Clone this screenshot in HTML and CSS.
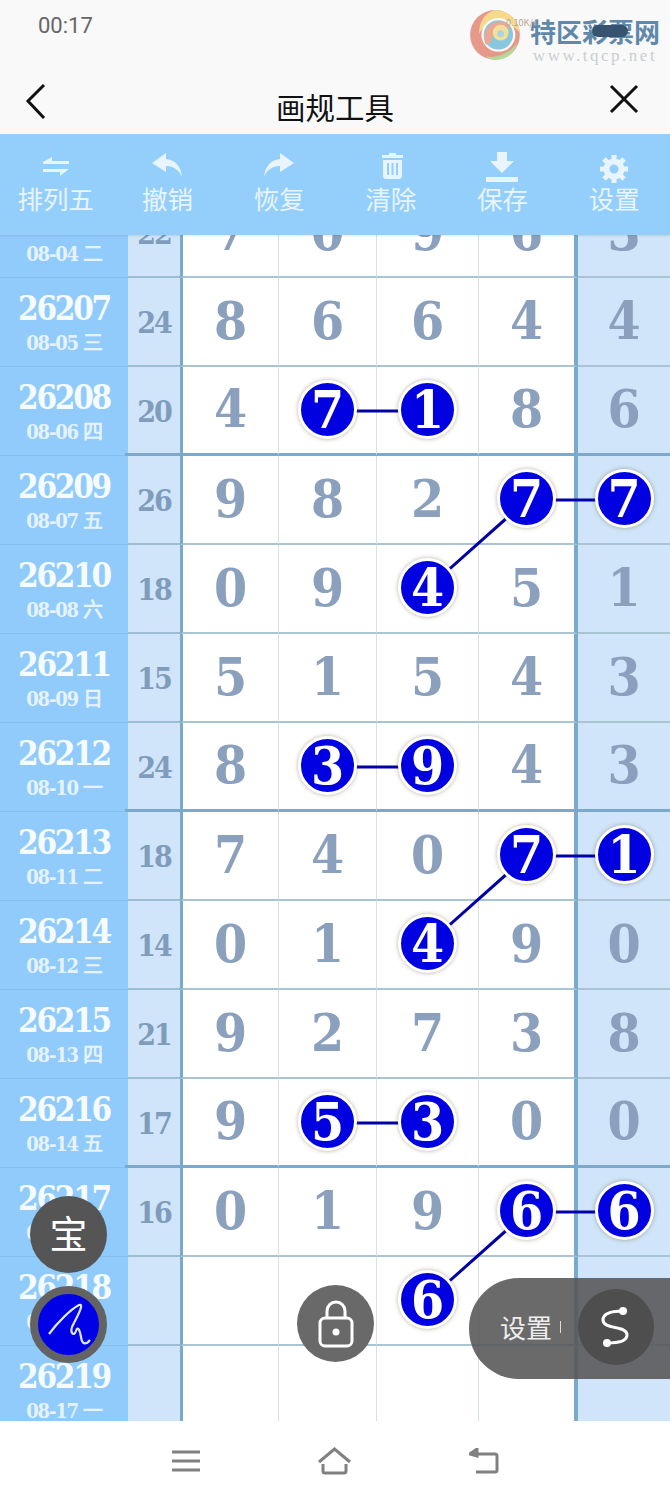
FILE: index.html
```html
<!DOCTYPE html>
<html lang="zh-CN">
<head>
    <meta charset="UTF-8">
    <meta name="viewport" content="width=device-width, initial-scale=1.0">
    <title>画规工具</title>
    <link rel="stylesheet" href="styles.css">
</head>
<body>
<div class="screen">
    <div class="status-bar">
        <span class="time">00:17</span>
        <div class="watermark">
            <svg class="watermark-logo" viewBox="4 5 44 46" width="50" height="52">
                <circle cx="26" cy="27" r="22" fill="#e58f80"/>
                <path d="M26 5a22 22 0 0 1 22 20c-6-7-14-10-24-8-6 1-10 5-12 9 0-10 4-18 14-21z" fill="#f4d77e"/>
                <path d="M46 34c-3 10-10 15-20 15-3 0-6-1-8-3 10 2 20-2 28-12z" fill="#a9d98f"/>
                <circle cx="29" cy="27" r="15" fill="#f9f9f9"/>
                <circle cx="29" cy="27" r="13" fill="#7cc3dd"/>
                <path d="M18 36c-4-8 0-20 12-21 5 0 9 3 11 7-7-4-15-2-17 5-1 4 0 7-6 9z" fill="#e8a08c"/>
                <circle cx="31" cy="25" r="7" fill="#f6dc8d"/>
                <circle cx="31" cy="26" r="3" fill="#9fd0dc"/>
            </svg>
            <div class="watermark-text">
                <span class="watermark-name">特区彩票网</span>
                <span class="watermark-url">www.tqcp.net</span>
            </div>
            <span class="net-speed">0.10K/s</span>
            <span class="net-pill"></span>
        </div>
    </div>

    <div class="nav-bar">
        <svg class="nav-back" viewBox="0 0 30 40" width="30" height="40"><path d="M22 3 6 19l16 17" fill="none" stroke="#111" stroke-width="3"/></svg>
        <span class="nav-title">画规工具</span>
        <svg class="nav-close" viewBox="0 0 34 34" width="34" height="34"><path d="M4 4l26 26M30 4 4 30" fill="none" stroke="#111" stroke-width="3"/></svg>
    </div>

    <div class="toolbar">
        <div class="tool">
            <svg viewBox="0 0 32 32" width="32" height="32"><path d="M3 10 12 5v4h17v3H3zM29 17H3v3h17v4z" fill="#e8f4fe"/></svg>
            <span>排列五</span>
        </div>
        <div class="tool">
            <svg viewBox="0 0 32 32" width="32" height="32"><path d="M15 1 1 11l14 9v-6c8 0 13 4 16 11-1-10-6-17-16-18z" fill="#e8f4fe"/></svg>
            <span>撤销</span>
        </div>
        <div class="tool">
            <svg viewBox="0 0 32 32" width="32" height="32"><path d="M17 1l14 10-14 9v-6C9 14 4 18 1 25c1-10 6-17 16-18z" fill="#e8f4fe"/></svg>
            <span>恢复</span>
        </div>
        <div class="tool">
            <svg viewBox="0 0 32 32" width="32" height="32"><path d="M14 1h7v2h7v3H7V3h7zM8 8h19v16a3 3 0 0 1-3 3H11a3 3 0 0 1-3-3zm4 3v12h2V11zm4.500 0v12h2V11zM21 11v12h2V11z" fill="#e8f4fe" fill-rule="evenodd"/></svg>
            <span>清除</span>
        </div>
        <div class="tool">
            <svg viewBox="0 0 32 32" width="32" height="32"><path d="M11 0h10v9h7L16 21 4 9h7zM0 25h32v5H0z" fill="#e8f4fe"/></svg>
            <span>保存</span>
        </div>
        <div class="tool">
            <svg viewBox="0 0 32 32" width="32" height="32"><circle cx="16" cy="17" r="7.500" fill="none" stroke="#e8f4fe" stroke-width="6"/><path d="M16 3v6M16 25v6M2 17h6M24 17h6M6 7l4 4M22 23l4 4M26 7l-4 4M10 23l-4 4" stroke="#e8f4fe" stroke-width="5"/></svg>
            <span>设置</span>
        </div>
    </div>

    <div class="chart-wrap">
        <div class="chart">
            <svg class="links" viewBox="0 0 670 1246" width="670" height="1246">
                <path d="M327 222H427"/>
                <path d="M527 311H624M427 400 527 311"/>
                <path d="M327 578H427"/>
                <path d="M527 667H624M427 756 527 667"/>
                <path d="M327 934H427"/>
                <path d="M527 1023H624M427 1112 527 1023"/>
            </svg>

            <div class="row"><div class="issue"><b>26206</b><small>08-04 二</small></div><div class="sum">22</div><div class="cell">7</div><div class="cell">0</div><div class="cell">9</div><div class="cell">6</div><div class="cell last">3</div></div>
            <div class="row"><div class="issue"><b>26207</b><small>08-05 三</small></div><div class="sum">24</div><div class="cell">8</div><div class="cell">6</div><div class="cell">6</div><div class="cell">4</div><div class="cell last">4</div></div>
            <div class="row group-end"><div class="issue"><b>26208</b><small>08-06 四</small></div><div class="sum">20</div><div class="cell">4</div><div class="cell"><span class="ball">7</span></div><div class="cell"><span class="ball">1</span></div><div class="cell">8</div><div class="cell last">6</div></div>
            <div class="row"><div class="issue"><b>26209</b><small>08-07 五</small></div><div class="sum">26</div><div class="cell">9</div><div class="cell">8</div><div class="cell">2</div><div class="cell"><span class="ball">7</span></div><div class="cell last"><span class="ball">7</span></div></div>
            <div class="row"><div class="issue"><b>26210</b><small>08-08 六</small></div><div class="sum">18</div><div class="cell">0</div><div class="cell">9</div><div class="cell"><span class="ball">4</span></div><div class="cell">5</div><div class="cell last">1</div></div>
            <div class="row"><div class="issue"><b>26211</b><small>08-09 日</small></div><div class="sum">15</div><div class="cell">5</div><div class="cell">1</div><div class="cell">5</div><div class="cell">4</div><div class="cell last">3</div></div>
            <div class="row group-end"><div class="issue"><b>26212</b><small>08-10 一</small></div><div class="sum">24</div><div class="cell">8</div><div class="cell"><span class="ball">3</span></div><div class="cell"><span class="ball">9</span></div><div class="cell">4</div><div class="cell last">3</div></div>
            <div class="row"><div class="issue"><b>26213</b><small>08-11 二</small></div><div class="sum">18</div><div class="cell">7</div><div class="cell">4</div><div class="cell">0</div><div class="cell"><span class="ball">7</span></div><div class="cell last"><span class="ball">1</span></div></div>
            <div class="row"><div class="issue"><b>26214</b><small>08-12 三</small></div><div class="sum">14</div><div class="cell">0</div><div class="cell">1</div><div class="cell"><span class="ball">4</span></div><div class="cell">9</div><div class="cell last">0</div></div>
            <div class="row"><div class="issue"><b>26215</b><small>08-13 四</small></div><div class="sum">21</div><div class="cell">9</div><div class="cell">2</div><div class="cell">7</div><div class="cell">3</div><div class="cell last">8</div></div>
            <div class="row group-end"><div class="issue"><b>26216</b><small>08-14 五</small></div><div class="sum">17</div><div class="cell">9</div><div class="cell"><span class="ball">5</span></div><div class="cell"><span class="ball">3</span></div><div class="cell">0</div><div class="cell last">0</div></div>
            <div class="row"><div class="issue"><b>26217</b><small>08-15 六</small></div><div class="sum">16</div><div class="cell">0</div><div class="cell">1</div><div class="cell">9</div><div class="cell"><span class="ball">6</span></div><div class="cell last"><span class="ball">6</span></div></div>
            <div class="row"><div class="issue"><b>26218</b><small>08-16 日</small></div><div class="sum"></div><div class="cell"></div><div class="cell"></div><div class="cell"><span class="ball">6</span></div><div class="cell"></div><div class="cell last"></div></div>
            <div class="row"><div class="issue"><b>26219</b><small>08-17 一</small></div><div class="sum"></div><div class="cell"></div><div class="cell"></div><div class="cell"></div><div class="cell"></div><div class="cell last"></div></div>
        </div>
    </div>

    <div class="bottom-nav">
        <svg viewBox="0 0 28 22" width="28" height="22"><path d="M0 2h28M0 11h28M0 20h28" stroke="#808080" stroke-width="3"/></svg>
        <svg viewBox="0 0 35 28" width="35" height="28"><path d="M2 15 17.500 2 33 15M6 17v7a2 2 0 0 0 2 2h19a2 2 0 0 0 2-2v-7" fill="none" stroke="#808080" stroke-width="3"/></svg>
        <svg viewBox="0 0 30 26" width="30" height="26"><path d="M8 1 1 6l7 2zM4 6h22a2 2 0 0 1 2 2v14a2 2 0 0 1-2 2H7" fill="none" stroke="#808080" stroke-width="3"/></svg>
    </div>

    <div class="fab fab-bao">宝</div>
    <div class="fab fab-draw">
        <svg viewBox="0 0 60 60" width="60" height="60"><path d="M10 39C18 28 32 14 40 10 46 8 38 22 33 32 31 38 35 42 37 36 39 30 41 36 42 42 43 50 47 50 51 45" fill="none" stroke="#dfe6ff" stroke-width="2.200"/></svg>
    </div>
    <div class="fab fab-lock">
        <svg viewBox="0 0 40 50" width="40" height="50"><rect x="4" y="19" width="32" height="28" rx="5" fill="none" stroke="#fff" stroke-width="3"/><path d="M11 19v-7a9 9 0 0 1 18 0v7" fill="none" stroke="#fff" stroke-width="3"/><circle cx="20" cy="33" r="3.500" fill="#fff"/></svg>
    </div>
    <div class="setting-pill">
        <span class="pill-label">设置</span>
        <span class="pill-tick"></span>
        <div class="pill-button">
            <svg viewBox="0 0 40 50" width="40" height="50"><path d="M27 9C16 9 7 11 7 18 7 28 31 23 31 33 31 40 20 41 11 41" fill="none" stroke="#fff" stroke-width="3"/><circle cx="27" cy="9" r="4" fill="#fff"/><circle cx="11" cy="41" r="4" fill="#fff"/></svg>
        </div>
    </div>
</div>
</body>
</html>
```

FILE: styles.css
```css
body {
    margin: 0;
    font-family: "Noto Sans CJK SC", "Noto Sans", sans-serif;
    background-color: #fff;
}

.screen {
    position: relative;
    width: 670px;
    height: 1500px;
    overflow: hidden;
    display: flex;
    flex-direction: column;
}

/* status bar + watermark */
.status-bar {
    height: 72px;
    background-color: #f9f9f9;
    display: flex;
    justify-content: space-between;
    padding: 10px 8px 0 38px;
    box-sizing: border-box;
}

.time {
    font-family: "Roboto", sans-serif;
    font-size: 22px;
    line-height: 32px;
    color: #666;
}

.watermark {
    position: relative;
    display: flex;
    gap: 10px;
    align-items: flex-start;
    width: 192px;
}

.watermark-logo {
    opacity: 0.9;
}

.watermark-text {
    display: flex;
    flex-direction: column;
    align-items: center;
    margin-top: 6px;
    width: 130px;
}

.watermark-name {
    font-size: 26px;
    line-height: 30px;
    font-weight: 700;
    color: #5f88aa;
}

.watermark-url {
    font-family: "Liberation Serif", serif;
    font-size: 17px;
    line-height: 20px;
    letter-spacing: 2.5px;
    color: #c9ced2;
}

.net-speed {
    position: absolute;
    left: 36px;
    top: 6px;
    font-size: 9px;
    color: #b8a28e;
}

.net-pill {
    position: absolute;
    left: 122px;
    top: 15px;
    width: 36px;
    height: 12px;
    border-radius: 6px;
    background-color: #36536f;
}

/* title bar */
.nav-bar {
    height: 62px;
    background-color: #f9f9f9;
    display: grid;
    grid-template-columns: 1fr auto 1fr;
    align-items: center;
    padding: 0 29px 10px 22px;
    box-sizing: border-box;
}

.nav-back {
    margin-top: 6px;
}

.nav-close {
    justify-self: end;
}

.nav-title {
    font-size: 29.500px;
    line-height: 40px;
    color: #111;
    margin-top: 14px;
    margin-left: 7px;
}

/* tool strip */
.toolbar {
    position: relative;
    z-index: 2;
    height: 101px;
    background-color: #94cffc;
    display: grid;
    grid-template-columns: repeat(6, 1fr);
    padding-top: 18px;
    box-sizing: border-box;
    box-shadow: 0 1px 2px rgba(0,0,0,0.1);
}

.tool {
    display: flex;
    flex-direction: column;
    align-items: center;
    color: #e8f4fe;
    font-size: 25.500px;
    line-height: 32px;
}

.tool svg {
    flex: none;
    margin-bottom: -2px;
}

/* chart */
.chart-wrap {
    height: 1186px;
    overflow: hidden;
    background-color: #fff;
}

.chart {
    position: relative;
    margin-top: -46px;
}

.links {
    position: absolute;
    left: 0;
    top: 0;
    z-index: 1;
    fill: none;
    stroke: #0000a8;
    stroke-width: 3;
}

.row {
    height: 89px;
    display: grid;
    grid-template-columns: 128px 52px 99px 98px 102px 99px 92px;
    font-family: "DejaVu Serif", "Liberation Serif", serif;
    font-stretch: condensed;
    font-weight: 700;
}

.issue {
    background-color: #90cbfb;
    color: #f6fbff;
    display: flex;
    flex-direction: column;
    align-items: center;
    box-sizing: border-box;
    padding-top: 12px;
    border-bottom: 1px solid #84bfee;
}

.issue b {
    font-size: 33px;
    line-height: 38px;
    letter-spacing: -2.300px;
}

.issue small {
    font-size: 20px;
    line-height: 31px;
    letter-spacing: -1.200px;
    color: #e6f3fe;
}

.sum {
    position: relative;
    background-color: #d0e5f9;
    color: #7f9cbc;
    font-size: 30px;
    letter-spacing: -2px;
    display: flex;
    align-items: center;
    justify-content: center;
    border-bottom: 2px solid #9dbdd2;
    box-sizing: border-box;
    padding-top: 2px;
}

.cell {
    color: #8aa0bd;
    font-size: 53px;
    display: flex;
    align-items: center;
    justify-content: center;
    border-right: 1px solid #d7e2e7;
    border-bottom: 2px solid #a9c5d4;
    box-sizing: border-box;
    padding-bottom: 4px;
}

.sum + .cell {
    border-left: 3px solid #7ba9cc;
}

.cell:nth-last-child(2) {
    border-right: 4px solid #7ba9cc;
}

.cell.last {
    background-color: #d0e5f9;
    border-right: 0;
}

.group-end .sum,
.group-end .cell {
    border-bottom: 3px solid #7ba9cc;
}

/* heavy group line pokes a little into the issue column */
.group-end .sum::before {
    content: '';
    position: absolute;
    left: -3px;
    bottom: -3px;
    width: 3px;
    height: 3px;
    background-color: #7ba9cc;
}

.ball {
    position: relative;
    z-index: 2;
    width: 53px;
    height: 53px;
    margin-top: 2px;
    border-radius: 50%;
    background-color: #0000e0;
    border: 3px solid #fff;
    box-shadow: 0 0 4px rgba(90,80,40,0.45);
    color: #fff;
    font-size: 53px;
    line-height: 53px;
    text-align: center;
}

/* bottom navigation */
.bottom-nav {
    flex: 1;
    background-color: #fff;
    display: flex;
    justify-content: center;
    gap: 117px;
    align-items: center;
}

/* floating buttons */
.fab {
    position: absolute;
    z-index: 3;
    width: 77px;
    height: 77px;
    border-radius: 50%;
    display: flex;
    align-items: center;
    justify-content: center;
}

.fab-bao {
    left: 30px;
    top: 1196px;
    background-color: #555;
    color: #fff;
    font-size: 38px;
    line-height: 40px;
    padding-bottom: 6px;
    box-sizing: border-box;
}

.fab-draw {
    left: 30px;
    top: 1286px;
    background-color: #0000e6;
    border: 8px solid #636363;
    box-sizing: border-box;
}

.fab-lock {
    left: 297px;
    top: 1285px;
    background-color: #696969;
}

.setting-pill {
    position: absolute;
    z-index: 3;
    left: 469px;
    top: 1278px;
    width: 201px;
    height: 101px;
    border-radius: 50px 0 0 50px;
    background-color: rgba(85,85,85,0.88);
    display: flex;
    align-items: center;
    box-sizing: border-box;
    padding: 0 0 4px 31px;
}

.pill-label {
    color: #eee;
    font-size: 26px;
    line-height: 34px;
}

.pill-tick {
    width: 1px;
    height: 12px;
    margin-left: 8px;
    background-color: #ddd;
}

.pill-button {
    position: absolute;
    left: 109px;
    top: 11px;
    width: 76px;
    height: 76px;
    border-radius: 50%;
    background-color: #4e4e4e;
    display: flex;
    align-items: center;
    justify-content: center;
}
```
